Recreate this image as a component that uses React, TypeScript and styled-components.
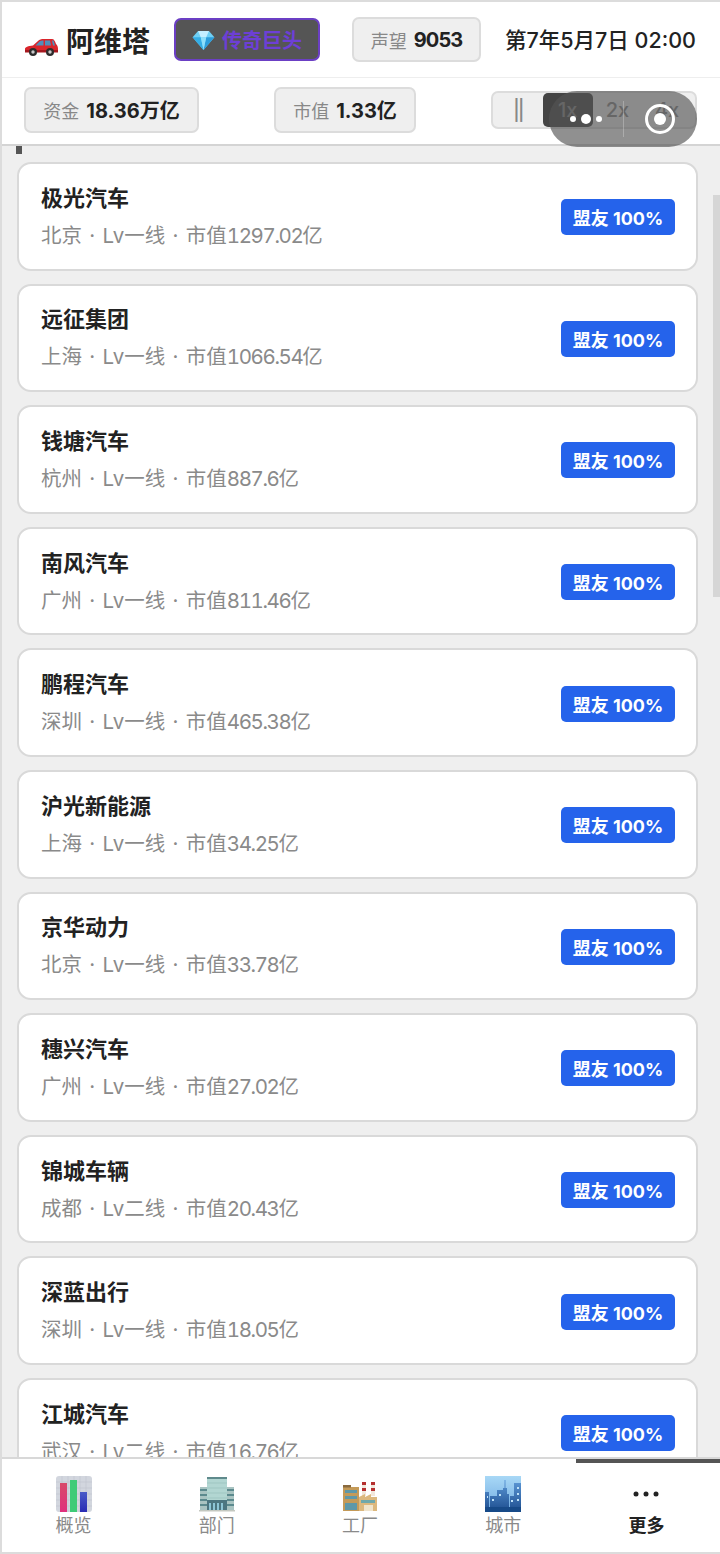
import styled, { createGlobalStyle } from "styled-components";

const GlobalStyle = createGlobalStyle`
    html, body {
        margin: 0;
        padding: 0;
        background: #fff;
    }
    * {
        box-sizing: border-box;
    }
`;

const FONT = `Inter, "Noto Sans CJK SC", "Noto Sans", sans-serif`;

const Page = styled.div`
    position: relative;
    width: 720px;
    height: 1554px;
    display: flex;
    flex-direction: column;
    overflow: hidden;
    background: #fff;
    font-family: ${FONT};
    border-top: 2px solid #dcdcdc;
    border-left: 2px solid #dcdcdc;
    border-bottom: 2px solid #dcdcdc;
`;

const TopBar = styled.div`
    height: 76px;
    flex: none;
    display: flex;
    align-items: center;
    padding: 0 24px 0 22px;
    border-bottom: 1px solid #eeeeee;
`;

const Brand = styled.div`
    display: flex;
    align-items: center;
    gap: 8px;
    width: 150px;
    font-size: 28px;
    font-weight: 700;
    color: #222;
    white-space: nowrap;
`;

const CarSlot = styled.div`
    display: flex;
    margin-top: 14px;
    margin-left: 1px;
`;

const RankBadge = styled.div`
    width: 146px;
    height: 43px;
    display: flex;
    align-items: center;
    justify-content: center;
    gap: 7px;
    background: #555;
    border: 2px solid #6b3fc4;
    border-radius: 7px;
    color: #6d3fd6;
    font-size: 20px;
    font-weight: 700;
`;

const Chip = styled.div<{ $w: number }>`
    width: ${(p) => p.$w}px;
    height: 46px;
    display: flex;
    align-items: center;
    justify-content: center;
    gap: 7px;
    background: #efefef;
    border: 2px solid #dcdcdc;
    border-radius: 7px;
    font-size: 18px;
    color: #888;
    white-space: nowrap;
    b {
        color: #222;
        font-weight: 700;
        font-size: 20px;
    }
`;

const FameChip = styled(Chip)`
    height: 45px;
    margin-left: 32px;
    b {
        letter-spacing: -0.9px;
    }
`;

const DateText = styled.div`
    margin-left: auto;
    margin-bottom: 2px;
    font-size: 21.5px;
    font-weight: 500;
    color: #222;
    white-space: nowrap;
`;

const StatBar = styled.div`
    height: 68px;
    flex: none;
    display: flex;
    align-items: center;
    justify-content: space-between;
    padding: 0 23px 3px 22px;
    border-bottom: 2px solid #d4d4d4;
`;

const SpeedGroup = styled.div`
    width: 206px;
    height: 38px;
    display: flex;
    align-items: center;
    padding-right: 3px;
    background: #efefef;
    border: 2px solid #dcdcdc;
    border-radius: 7px;
`;

const SpeedItem = styled.div<{ $active?: boolean }>`
    flex: 1;
    height: 34px;
    display: flex;
    align-items: center;
    justify-content: center;
    border-radius: 5px;
    font-size: 20px;
    font-weight: 500;
    color: #888;
    background: ${(p) => (p.$active ? "#444" : "transparent")};
`;

const PauseGlyph = styled.span`
    letter-spacing: -2px;
`;

const ListArea = styled.div`
    position: relative;
    flex: 1;
    min-height: 0;
    overflow: hidden;
    background: #efefef;
    padding: 16px 22px 0 15px;
    display: flex;
    flex-direction: column;
    gap: 13px;
`;

const TopTick = styled.div`
    position: absolute;
    left: 14px;
    top: 0;
    width: 6px;
    height: 8px;
    background: #555;
`;

const ScrollThumb = styled.div`
    position: absolute;
    right: 0;
    top: 49px;
    width: 7px;
    height: 402px;
    background: #d6d6d6;
`;

const Card = styled.div`
    flex: none;
    height: 108.6px;
    display: flex;
    align-items: center;
    justify-content: space-between;
    padding: 0 21px 0 22px;
    background: #fff;
    border: 2px solid #d9d9d9;
    border-radius: 14px;
`;

const CardText = styled.div`
    display: flex;
    flex-direction: column;
    gap: 9px;
`;

const CardName = styled.div`
    font-size: 22px;
    line-height: 30px;
    font-weight: 700;
    color: #222;
`;

const CardMeta = styled.div`
    font-size: 20.5px;
    line-height: 28px;
    color: #8a8a8a;
    white-space: pre;
    word-spacing: 1.55px;
`;

const MetaValue = styled.span`
    font-variant-numeric: tabular-nums;
    letter-spacing: -1.4px;
`;

const AllyTag = styled.div`
    width: 114px;
    height: 36px;
    margin-top: 2px;
    display: flex;
    align-items: center;
    justify-content: center;
    background: #2563eb;
    border-radius: 5px;
    color: #fff;
    font-size: 18px;
    font-weight: 700;
    white-space: nowrap;
`;

const TabBar = styled.div`
    position: relative;
    height: 95px;
    flex: none;
    display: grid;
    grid-template-columns: repeat(5, 1fr);
    padding-right: 2px;
    background: #fff;
    border-top: 2px solid #d8d8d8;
`;

const TabProgress = styled.div`
    position: absolute;
    right: 0;
    top: 0;
    width: 144px;
    height: 4px;
    background: #555;
`;

const Tab = styled.div<{ $active?: boolean }>`
    display: flex;
    flex-direction: column;
    align-items: center;
    padding-top: 17px;
    color: ${(p) => (p.$active ? "#222" : "#8a8a8a")};
    font-size: 18px;
    font-weight: ${(p) => (p.$active ? 700 : 400)};
    line-height: 28px;
`;

const TabIcon = styled.div`
    width: 36px;
    height: 36px;
    display: flex;
    align-items: center;
    justify-content: center;
`;

const Capsule = styled.div`
    position: absolute;
    left: 547px;
    top: 89px;
    width: 148px;
    height: 56px;
    display: flex;
    align-items: center;
    border-radius: 28px;
    background: rgba(85, 85, 85, 0.65);
`;

const CapsuleHalf = styled.div`
    flex: 1;
    height: 100%;
    display: flex;
    align-items: center;
    justify-content: center;
    gap: 5px;
`;

const CapsuleLine = styled.div`
    width: 1px;
    height: 36px;
    background: rgba(255, 255, 255, 0.25);
`;

const Dot = styled.div<{ $s: number }>`
    width: ${(p) => p.$s}px;
    height: ${(p) => p.$s}px;
    border-radius: 50%;
    background: #fff;
`;

const CarIcon = () => (
    <svg width="33" height="18" viewBox="0 0 33 18">
        <path d="M0 11c0-2 3-3 8-3.500L13 3c1.500-1.500 3-2 6-2h8c2 0 3 2 4 5 1.500 1 2 3 2 5v3H0z" fill="#d9252b" />
        <path d="M14.500 3.500c1-.8 2.500-1 4-1V7.500h-8zM20 2.500h5l1 5h-6zM27 2.500h1.500l1.500 5h-2z" fill="#4e8fbb" />
        <rect x="0" y="12" width="33" height="2.500" fill="#a5181f" />
        <circle cx="8" cy="14" r="4" fill="#2c2c2c" />
        <circle cx="8" cy="14" r="1.700" fill="#c8c8c8" />
        <circle cx="25" cy="14" r="4" fill="#2c2c2c" />
        <circle cx="25" cy="14" r="1.700" fill="#c8c8c8" />
    </svg>
);

const GemIcon = () => (
    <svg width="23" height="20" viewBox="0 0 24 22">
        <path d="M6 1h12l6 7-12 14L0 8z" fill="#6fd0f5" />
        <path d="M6 1l3 7h6l3-7z" fill="#c4eeff" />
        <path d="M0 8h9l3 14z" fill="#35aee6" />
        <path d="M24 8h-9l-3 14z" fill="#2d9ddb" />
        <path d="M9 8h6l-3 14z" fill="#8fdffa" />
    </svg>
);

const ChartIcon = () => (
    <svg width="36" height="36" viewBox="0 0 36 36">
        <defs>
            <linearGradient id="barRed" x1="0" y1="0" x2="0" y2="1">
                <stop offset="0" stopColor="#d84a6a" />
                <stop offset="1" stopColor="#e0307c" />
            </linearGradient>
            <linearGradient id="barBlue" x1="0" y1="0" x2="0" y2="1">
                <stop offset="0" stopColor="#4a5cc8" />
                <stop offset="1" stopColor="#2a2cb4" />
            </linearGradient>
        </defs>
        <rect width="36" height="36" rx="3" fill="#d2d6de" />
        <path d="M0 6h36M0 12h36M0 18h36M0 24h36M0 30h36M6 0v36M12 0v36M18 0v36M24 0v36M30 0v36" stroke="#bfc4ce" strokeWidth="0.6" />
        <rect x="4" y="7" width="7" height="29" fill="url(#barRed)" />
        <rect x="14" y="4" width="7" height="32" fill="#3fcb78" />
        <rect x="24" y="16" width="7" height="20" fill="url(#barBlue)" />
    </svg>
);

const OfficeIcon = () => (
    <svg width="36" height="36" viewBox="0 0 36 36">
        <rect x="1" y="11" width="34" height="23" fill="#a9c4c2" />
        <path d="M1 14h34M1 19h34M1 24h34M1 29h34" stroke="#5c8a8e" strokeWidth="1.800" />
        <rect x="8" y="1" width="20" height="24" fill="#b2d6d2" />
        <rect x="8" y="1" width="20" height="2" fill="#5f8a8c" />
        <path d="M8 7h20M8 12h20M8 17h20M8 22h20" stroke="#9fc6c2" strokeWidth="1" />
        <rect x="8" y="24" width="20" height="10" fill="#4c7680" />
        <path d="M11 27v7M15 27v7M19 27v7M23 27v7" stroke="#8ec6d6" strokeWidth="2" />
        <rect x="0" y="34" width="36" height="1.500" fill="#c4c8c0" />
    </svg>
);

const FactoryIcon = () => (
    <svg width="36" height="36" viewBox="0 0 36 36">
        <rect x="20" y="6" width="4" height="14" fill="#f2e8dc" />
        <rect x="29" y="6" width="4" height="14" fill="#f2e8dc" />
        <path d="M20 6h4v3h-4zM20 12h4v3h-4zM29 6h4v3h-4zM29 12h4v3h-4z" fill="#b5302f" />
        <rect x="1" y="11" width="16" height="24" fill="#c49a58" />
        <rect x="1" y="9" width="8" height="2.500" fill="#8a6a3e" />
        <path d="M17 21l6-3v3l6-3v3h6v14H17z" fill="#dcb87e" />
        <path d="M3 14h12v3H3zM3 20h12v3H3zM3 27h12v7H3z" fill="#5e98a8" />
        <rect x="19" y="24" width="14" height="3" fill="#6fa8ac" />
        <rect x="22" y="29" width="9" height="6" fill="#f0e4cc" />
    </svg>
);

const CityIcon = () => (
    <svg width="36" height="36" viewBox="0 0 36 36">
        <defs>
            <linearGradient id="sky" x1="0" y1="0" x2="0" y2="1">
                <stop offset="0" stopColor="#a8d8f6" />
                <stop offset="1" stopColor="#6ea8e0" />
            </linearGradient>
            <linearGradient id="towers" x1="0" y1="0" x2="0" y2="1">
                <stop offset="0" stopColor="#5e9ad8" />
                <stop offset="1" stopColor="#1c4c8e" />
            </linearGradient>
        </defs>
        <rect width="36" height="36" fill="url(#sky)" />
        <path d="M0 16h4v20H0zM5 20h7v16H5zM12 14h6v22h-6zM19.500 4h1v8h1.500v6h2v18h-8V18h2v-6h1.500zM25 20h4v16h-4zM29 7h7v29h-7z" fill="url(#towers)" />
        <rect x="0" y="31" width="36" height="5" fill="#174a88" />
        <path d="M7 23h2v2H7zM14 18h2v2h-2zM32 11h2v2h-2zM32 17h2v2h-2zM32 23h2v2h-2zM26 24h2v2h-2zM2 20h1v2H2z" fill="#bfe2f8" />
    </svg>
);

const MoreIcon = () => (
    <svg width="36" height="36" viewBox="0 0 36 36">
        <circle cx="8" cy="18" r="2.500" fill="#222" />
        <circle cx="18" cy="18" r="2.500" fill="#222" />
        <circle cx="28" cy="18" r="2.500" fill="#222" />
    </svg>
);

const RingIcon = () => (
    <svg width="32" height="32" viewBox="0 0 32 32">
        <circle cx="16" cy="16" r="13.500" fill="none" stroke="#fff" strokeWidth="3" />
        <circle cx="16" cy="16" r="6" fill="#fff" />
    </svg>
);

const companies = [
    { name: "极光汽车", city: "北京", tier: "一线", value: "1297.02" },
    { name: "远征集团", city: "上海", tier: "一线", value: "1066.54" },
    { name: "钱塘汽车", city: "杭州", tier: "一线", value: "887.6" },
    { name: "南风汽车", city: "广州", tier: "一线", value: "811.46" },
    { name: "鹏程汽车", city: "深圳", tier: "一线", value: "465.38" },
    { name: "沪光新能源", city: "上海", tier: "一线", value: "34.25" },
    { name: "京华动力", city: "北京", tier: "一线", value: "33.78" },
    { name: "穗兴汽车", city: "广州", tier: "一线", value: "27.02" },
    { name: "锦城车辆", city: "成都", tier: "二线", value: "20.43" },
    { name: "深蓝出行", city: "深圳", tier: "一线", value: "18.05" },
    { name: "江城汽车", city: "武汉", tier: "二线", value: "16.76" },
];

const tabs = [
    { label: "概览", icon: <ChartIcon /> },
    { label: "部门", icon: <OfficeIcon /> },
    { label: "工厂", icon: <FactoryIcon /> },
    { label: "城市", icon: <CityIcon /> },
    { label: "更多", icon: <MoreIcon />, active: true },
];

function App() {
    return (
        <Page>
            <GlobalStyle />
            <TopBar>
                <Brand>
                    <CarSlot>
                        <CarIcon />
                    </CarSlot>
                    阿维塔
                </Brand>
                <RankBadge>
                    <GemIcon />
                    传奇巨头
                </RankBadge>
                <FameChip $w={129}>
                    声望 <b>9053</b>
                </FameChip>
                <DateText>第7年5月7日 02:00</DateText>
            </TopBar>
            <StatBar>
                <Chip $w={175}>
                    资金 <b>18.36万亿</b>
                </Chip>
                <Chip $w={142}>
                    市值 <b>1.33亿</b>
                </Chip>
                <SpeedGroup>
                    <SpeedItem>
                        <PauseGlyph>||</PauseGlyph>
                    </SpeedItem>
                    <SpeedItem $active>1x</SpeedItem>
                    <SpeedItem>2x</SpeedItem>
                    <SpeedItem>4x</SpeedItem>
                </SpeedGroup>
            </StatBar>
            <ListArea>
                <TopTick />
                <ScrollThumb />
                {companies.map((c) => (
                    <Card key={c.name}>
                        <CardText>
                            <CardName>{c.name}</CardName>
                            <CardMeta>
                                {c.city} · Lv{c.tier} · 市值<MetaValue>{c.value}</MetaValue>亿
                            </CardMeta>
                        </CardText>
                        <AllyTag>盟友 100%</AllyTag>
                    </Card>
                ))}
            </ListArea>
            <TabBar>
                <TabProgress />
                {tabs.map((t) => (
                    <Tab key={t.label} $active={t.active}>
                        <TabIcon>{t.icon}</TabIcon>
                        {t.label}
                    </Tab>
                ))}
            </TabBar>
            <Capsule>
                <CapsuleHalf>
                    <Dot $s={6} />
                    <Dot $s={10} />
                    <Dot $s={6} />
                </CapsuleHalf>
                <CapsuleLine />
                <CapsuleHalf>
                    <RingIcon />
                </CapsuleHalf>
            </Capsule>
        </Page>
    );
}

export default App;
